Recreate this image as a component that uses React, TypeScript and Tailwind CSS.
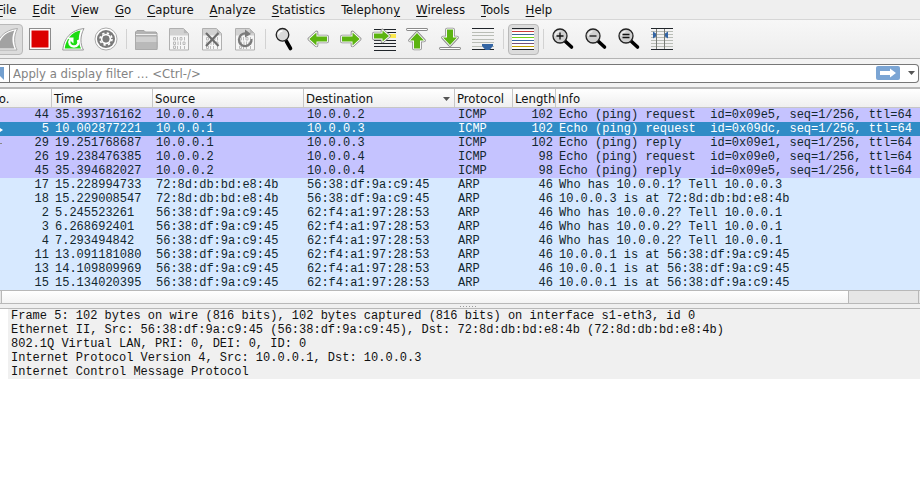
import React, { useState } from 'react';

const menus = [
  { name: 'File', key: 0 },
  { name: 'Edit', key: 0 },
  { name: 'View', key: 0 },
  { name: 'Go', key: 0 },
  { name: 'Capture', key: 0 },
  { name: 'Analyze', key: 0 },
  { name: 'Statistics', key: 0 },
  { name: 'Telephony', key: 8 },
  { name: 'Wireless', key: 0 },
  { name: 'Tools', key: 0 },
  { name: 'Help', key: 0 }
];

const packets = [
  { no: 44, time: '35.393716162', src: '10.0.0.4', dst: '10.0.0.2', proto: 'ICMP', len: 102, info: 'Echo (ping) request  id=0x09e5, seq=1/256, ttl=64' },
  { no: 5, time: '10.002877221', src: '10.0.0.1', dst: '10.0.0.3', proto: 'ICMP', len: 102, info: 'Echo (ping) request  id=0x09dc, seq=1/256, ttl=64' },
  { no: 29, time: '19.251768687', src: '10.0.0.1', dst: '10.0.0.3', proto: 'ICMP', len: 102, info: 'Echo (ping) reply    id=0x09e1, seq=1/256, ttl=64' },
  { no: 26, time: '19.238476385', src: '10.0.0.2', dst: '10.0.0.4', proto: 'ICMP', len: 98, info: 'Echo (ping) request  id=0x09e0, seq=1/256, ttl=64' },
  { no: 45, time: '35.394682027', src: '10.0.0.2', dst: '10.0.0.4', proto: 'ICMP', len: 98, info: 'Echo (ping) reply    id=0x09e5, seq=1/256, ttl=64' },
  { no: 17, time: '15.228994733', src: '72:8d:db:bd:e8:4b', dst: '56:38:df:9a:c9:45', proto: 'ARP', len: 46, info: 'Who has 10.0.0.1? Tell 10.0.0.3' },
  { no: 18, time: '15.229008547', src: '72:8d:db:bd:e8:4b', dst: '56:38:df:9a:c9:45', proto: 'ARP', len: 46, info: '10.0.0.3 is at 72:8d:db:bd:e8:4b' },
  { no: 2, time: '5.245523261', src: '56:38:df:9a:c9:45', dst: '62:f4:a1:97:28:53', proto: 'ARP', len: 46, info: 'Who has 10.0.0.2? Tell 10.0.0.1' },
  { no: 3, time: '6.268692401', src: '56:38:df:9a:c9:45', dst: '62:f4:a1:97:28:53', proto: 'ARP', len: 46, info: 'Who has 10.0.0.2? Tell 10.0.0.1' },
  { no: 4, time: '7.293494842', src: '56:38:df:9a:c9:45', dst: '62:f4:a1:97:28:53', proto: 'ARP', len: 46, info: 'Who has 10.0.0.2? Tell 10.0.0.1' },
  { no: 11, time: '13.091181080', src: '56:38:df:9a:c9:45', dst: '62:f4:a1:97:28:53', proto: 'ARP', len: 46, info: '10.0.0.1 is at 56:38:df:9a:c9:45' },
  { no: 13, time: '14.109809969', src: '56:38:df:9a:c9:45', dst: '62:f4:a1:97:28:53', proto: 'ARP', len: 46, info: '10.0.0.1 is at 56:38:df:9a:c9:45' },
  { no: 15, time: '15.134020395', src: '56:38:df:9a:c9:45', dst: '62:f4:a1:97:28:53', proto: 'ARP', len: 46, info: '10.0.0.1 is at 56:38:df:9a:c9:45' }
];

const details = [
  'Frame 5: 102 bytes on wire (816 bits), 102 bytes captured (816 bits) on interface s1-eth3, id 0',
  'Ethernet II, Src: 56:38:df:9a:c9:45 (56:38:df:9a:c9:45), Dst: 72:8d:db:bd:e8:4b (72:8d:db:bd:e8:4b)',
  '802.1Q Virtual LAN, PRI: 0, DEI: 0, ID: 0',
  'Internet Protocol Version 4, Src: 10.0.0.1, Dst: 10.0.0.3',
  'Internet Control Message Protocol'
];

// Sheet with a folded corner and binary digits, shared by the file icons
function Sheet() {
  return (
    <>
      <path d="M1.500 .5h14l5 5v16.500h-19z" fill="#f6f6f6" stroke="#b0b0b0" />
      <path d="M2 1h13.500v4.500h4.500v2H2z" fill="#d2d2d2" />
      <path d="M15.500 .5v5h5z" fill="#b8b8b8" />
      <g fill="none" stroke="#bababa">
        <path d="M5.500 9.500h2v2.500h-2zM9.500 9v3.500M12 9.500h2v2.500h-2zM16.500 9v3.500" />
        <path d="M5.500 14h2v2.500h-2zM10 13.500v3.500M12.500 13.500v3.500M15 14h2v2.500h-2z" />
        <path d="M5.500 18h2v2.500h-2zM9.500 18v3M12.500 18v3M16.500 18v3" />
      </g>
    </>
  );
}

function Lens({ children }: { children?: React.ReactNode }) {
  return (
    <>
      <path d="m13.500 13.500 6 5.500" stroke="#000" strokeWidth="3.600" strokeLinecap="round" />
      <circle cx="8" cy="8" r="7" fill="#cfcfcf" stroke="#222" strokeWidth="1.300" />
      <path d="M3.500 8a4.500 4.500 0 0 1 4-4.500" fill="none" stroke="#ededed" strokeWidth="1.500" />
      <g stroke="#111" strokeWidth="1.300">{children}</g>
    </>
  );
}

function Arrow({ d }: { d: string }) {
  return (
    <>
      <path d={d} fill="#fff" stroke="#8a8a8a" strokeWidth="3.600" strokeLinejoin="round" />
      <path d={d} fill="#5cb411" stroke="#fff" strokeWidth="1.800" strokeLinejoin="round" />
      <path d={d} fill="#5cb411" />
    </>
  );
}

const tools = [
  {
    label: 'Start capture',
    pressed: true,
    icon: (
      <>
        <path d="M0 22C1 10 8 2 21.500.5 17.500 8 18 16 21 22z" fill="#fff" stroke="#aaa" />
        <path d="M2 20.500C3 11 9 4.500 18.500 2.500 15.500 9 16 15 18.500 20.500z" fill="#a2a2a2" />
      </>
    )
  },
  {
    label: 'Stop capture',
    icon: (
      <>
        <rect x=".5" y=".5" width="21" height="21" fill="#f6f6f6" stroke="#8c8c8c" />
        <rect x="2" y="2" width="18" height="18" fill="#dc0000" stroke="#fff" />
      </>
    )
  },
  {
    label: 'Restart capture',
    icon: (
      <>
        <path d="M.7 22C2 10 9 2 22 .5 18 8 18 16 21.500 22z" fill="#fff" stroke="#999" />
        <path d="M2.700 20.500C4 11 10 4 18.500 2.500 16 9 16.500 15 19 20.500z" fill="#1ddb12" />
        <path d="M8 12c-2 3 .3 6.500 4 6.500s5.500-3.500 3.800-6.500" fill="none" stroke="#fff" strokeWidth="2.300" />
        <path d="M5 9.500h6.500v6z" fill="#fff" />
      </>
    )
  },
  {
    label: 'Capture options',
    icon: (
      <>
        <circle cx="11" cy="11" r="11" fill="#fff" stroke="#aaa" strokeWidth="1" />
        <circle cx="11" cy="11" r="9" fill="#7a7a7a" />
        <circle cx="11" cy="11" r="6" fill="none" stroke="#fff" strokeWidth="1.600" strokeDasharray="2.360 2.360" />
        <circle cx="11" cy="11" r="4.300" fill="none" stroke="#fff" strokeWidth="1.800" />
        <circle cx="11" cy="11" r="3.300" fill="#7a7a7a" />
      </>
    ),
    last: true
  },
  {
    label: 'Open file',
    icon: (
      <>
        <path d="M.5 19.500V4L2 2.500h7L10.500 4H21l1 1v14.500z" fill="#b4b4b4" stroke="#a4a4a4" />
        <path d="M1 6.500h20.500" stroke="#eee" />
        <path d="M0 8h22.500v6H0z" fill="#d0d0d0" />
        <path d="M0 14h22.500v7.500H0z" fill="#b9b9b9" />
        <path d="M.5 8h21.500v13.500H.5z" fill="none" stroke="#aaa" />
      </>
    )
  },
  { label: 'Save file', icon: <Sheet /> },
  {
    label: 'Close file',
    icon: (
      <>
        <Sheet />
        <path d="m5 5 12.500 13M17.500 5 5 18" stroke="#6c6c6c" strokeWidth="2.200" />
      </>
    )
  },
  {
    label: 'Reload file',
    icon: (
      <>
        <Sheet />
        <path d="M12 5.500a6.300 6.300 0 1 0 5.500 5.500" fill="none" stroke="#7a7a7a" strokeWidth="2.300" />
        <path d="M11 1.500 17 6l-6 3.500z" fill="#7a7a7a" />
      </>
    ),
    last: true
  },
  {
    label: 'Find packet',
    icon: (
      <>
        <path d="m12.500 13.500 4 7" stroke="#000" strokeWidth="3.600" strokeLinecap="round" />
        <circle cx="8.500" cy="6.800" r="6.300" fill="#d9d9d9" stroke="#222" strokeWidth="1.300" />
        <path d="M4.500 6.500A4 4 0 0 1 8.500 3" fill="none" stroke="#fff" strokeWidth="1.500" />
      </>
    )
  },
  { label: 'Previous packet', icon: <Arrow d="M2.300 11 9.500 4.500v4h10.500v5H9.500v4z" /> },
  { label: 'Next packet', icon: <Arrow d="M19.700 11 12.500 4.500v4H2v5h10.500v4z" /> },
  {
    label: 'Go to packet',
    icon: (
      <>
        <path d="M1 1.500h22M1 4.500h22M1 12.500h22M1 15.500h22M1 18.500h22M1 22.500h22" stroke="#20252a" />
        <path d="M16 6h7v4h-7z" fill="#fce94f" />
        <Arrow d="M16 8 9.500 2.500v3H1v5h8.500v3z" />
      </>
    )
  },
  {
    label: 'First packet',
    icon: (
      <>
        <path d="M1.500 1.500h19" stroke="#8a8a8a" strokeWidth="2.800" strokeLinecap="round" />
        <path d="M1.500 1.500h19" stroke="#fff" strokeLinecap="round" />
        <Arrow d="M11 5 4 12.500h4v8h6v-8h4z" />
      </>
    )
  },
  {
    label: 'Last packet',
    icon: (
      <>
        <path d="M1.500 20.500h19" stroke="#8a8a8a" strokeWidth="2.800" strokeLinecap="round" />
        <path d="M1.500 20.500h19" stroke="#fff" strokeLinecap="round" />
        <Arrow d="M11 17 4 9.500h4v-8h6v8h4z" />
      </>
    )
  },
  {
    label: 'Auto scroll',
    icon: (
      <>
        <path d="M0 .5h22M0 21.500h22" stroke="#20252a" />
        <path d="M0 4.500h22M0 7.500h22M0 11.500h22M0 14.500h22M0 18.500h22" stroke="#b9bdb6" />
        <path d="M10 16h11v2L17.500 22h-4L10 18z" fill="#3465a4" />
      </>
    ),
    last: true
  },
  {
    label: 'Colorize packets',
    pressed: true,
    icon: (
      <>
        <path d="M0 2h22v19H0z" fill="#fff" />
        <path d="M0 .5h22M0 21.500h22" stroke="#20252a" />
        <path d="M0 3.500h22" stroke="#cc3a3a" />
        <path d="M0 6.500h22" stroke="#3c6c94" />
        <path d="M0 9.500h22" stroke="#73d216" />
        <path d="M0 12.500h22" stroke="#3465a4" />
        <path d="M0 15.500h22" stroke="#75507b" />
        <path d="M0 18.500h22" stroke="#c4a000" />
      </>
    ),
    last: true
  },
  { label: 'Zoom in', icon: <Lens><path d="M4.500 8h7M8 4.500v7" /></Lens> },
  { label: 'Zoom out', icon: <Lens><path d="M4.500 8h7" /></Lens> },
  { label: 'Normal size', icon: <Lens><path d="M4.500 6.500h7M4.500 9.500h7" /></Lens> },
  {
    label: 'Resize columns',
    icon: (
      <>
        <path d="M0 3.500h22M0 6.500h22M0 9.500h22M0 12.500h22M0 15.500h22M0 18.500h22" stroke="#b9bdb6" />
        <path d="M0 .5h22M0 21.500h22" stroke="#20252a" />
        <path d="M5.500 1v20M13.500 1v20" stroke="#777b76" />
        <path d="M2 3.500l3 2v3l-3 2zM17 3.500l-3 2v3l3 2z" fill="#3465a4" />
      </>
    )
  }
];

function ToolBar() {
  return (
    <div className="flex h-10 items-center overflow-hidden border-y border-t-[#d6d6d6] border-b-[#b4b4b4] bg-linear-to-b from-[#f7f7f7] to-[#ededed]" role="toolbar">
      <div className="-ml-[9px] flex shrink-0 items-center">
        {tools.map((tool) => (
          <React.Fragment key={tool.label}>
            <button
              type="button"
              aria-label={tool.label}
              className={`mx-px flex size-[31px] items-center justify-center rounded-sm border ${
                tool.pressed ? 'border-[#b9b9b9] bg-[#dcdcdc]' : 'border-transparent'
              }`}
            >
              <svg className="size-[23px] overflow-visible" viewBox="0 0 23 23">{tool.icon}</svg>
            </button>
            {tool.last && <span className="mx-[3px] h-5 w-px bg-[#d2d2d2]" />}
          </React.Fragment>
        ))}
      </div>
    </div>
  );
}

function FilterBar() {
  const [filter, setFilter] = useState('');

  return (
    <div className="flex h-7 items-center bg-[#f3f3f3] pr-px">
      <div className="flex h-[19px] flex-1 items-center rounded-r-sm border-y border-r border-[#777] bg-white">
        <button type="button" aria-label="Bookmark filter" className="flex h-full w-[10px] items-center border-r border-[#777]">
          <svg className="h-[13px] w-1" viewBox="0 0 4 13">
            <path d="M0 0h4v13L0 9z" fill="#729fcf" />
          </svg>
        </button>
        <input
          aria-label="Display filter"
          className="h-full min-w-0 flex-1 bg-transparent pl-[3px] text-[13px] leading-4 outline-none placeholder:text-[#838383]"
          placeholder="Apply a display filter … <Ctrl-/>"
          value={filter}
          onChange={(e) => setFilter(e.target.value)}
        />
        <button type="button" aria-label="Apply filter" className="flex h-[14px] w-6 items-center justify-center rounded-xs bg-[#7ba5d4]">
          <svg className="h-[10px] w-4" viewBox="0 0 16 10">
            <path d="M0 3h10V.5L16 5l-6 4.500V7H0z" fill="#fff" />
          </svg>
        </button>
        <button type="button" aria-label="Recent filters" className="flex h-full w-[18px] items-center justify-center pl-1">
          <svg className="h-1 w-[7px]" viewBox="0 0 7 4">
            <path d="M0 0h7L3.500 4z" fill="#555" />
          </svg>
        </button>
      </div>
    </div>
  );
}

function PacketList() {
  const [selected, setSelected] = useState(5);
  const head = 'overflow-hidden border-r border-b border-[#c6c6c6] pt-[2px] pl-[2px] text-left font-normal';

  const rowColor = (no: number, proto: string) => {
    if (no === selected) return 'bg-[#308cc6] text-white';
    return proto === 'ICMP' ? 'bg-[#c5c3ff] text-[#12272e]' : 'bg-[#d7e9ff] text-[#12272e]';
  };

  return (
    <div className="overflow-hidden border-t-2 border-[#b8b8b8]">
      <table className="w-full table-fixed border-separate border-spacing-0 whitespace-pre">
        <colgroup>
          <col className="w-[52px]" />
          <col className="w-[101px]" />
          <col className="w-[151px]" />
          <col className="w-[151px]" />
          <col className="w-[58px]" />
          <col className="w-[43px]" />
          <col />
        </colgroup>
        <thead>
          <tr className="bg-linear-to-b from-white to-[#eeeeee] text-[13px] leading-4">
            <th className={head}><span className="-ml-3">No.</span></th>
            <th className={head}>Time</th>
            <th className={head}>Source</th>
            <th className={head}>
              <span className="flex items-center justify-between pr-1">
                Destination
                <svg className="h-1 w-[7px]" viewBox="0 0 7 4"><path d="M0 0h7L3.500 4z" fill="#555" /></svg>
              </span>
            </th>
            <th className={head}>Protocol</th>
            <th className={head}>Length</th>
            <th className="border-b border-[#c6c6c6] pt-[2px] pl-[2px] text-left font-normal">Info</th>
          </tr>
        </thead>
        <tbody className="font-['Liberation_Mono',monospace] text-[12px] leading-[14px]">
          {packets.map((p) => (
            <tr key={p.no} className={rowColor(p.no, p.proto)} onClick={() => setSelected(p.no)}>
              <td>
                <span className="flex h-[14px] items-center justify-between pr-[3px]">
                  <svg className="h-[7px] w-1" viewBox="0 0 4 7">
                    {p.no === 5 && <path d="M0 2l3 2-3 2z" fill="#fff" />}
                    {p.no === 29 && <path d="M0 3.500h2" stroke="#888" />}
                  </svg>
                  {p.no}
                </span>
              </td>
              <td className="pl-[3px]">{p.time}</td>
              <td className="pl-[3px]">{p.src}</td>
              <td className="pl-[3px]">{p.dst}</td>
              <td className="pl-[3px]">{p.proto}</td>
              <td className="pr-[3px] text-right">{p.len}</td>
              <td className="overflow-hidden pl-[3px]">{p.info}</td>
            </tr>
          ))}
        </tbody>
      </table>

      {/* Horizontal scroll track */}
      <div className="flex h-[14px] border-y border-[#b8b8b8] bg-[#e6e6e6] px-px">
        <div className="w-[848px] border-x border-[#b8b8b8] bg-linear-to-b from-white to-[#f3f3f3]" />
        <div className="flex-1 border-r border-[#b8b8b8]" />
      </div>
    </div>
  );
}

export default function App() {
  return (
    <div className="flex min-h-screen flex-col bg-white font-['DejaVu_Sans_Condensed','DejaVu_Sans',sans-serif] text-[13px] text-[#111]">
      <nav className="flex h-[19px] items-start gap-4 overflow-hidden bg-[#efefef]">
        {menus.map((m, i) => (
          <button key={m.name} type="button" className={`shrink-0 leading-5 ${i === 0 ? '-ml-[3px]' : ''}`}>
            {m.name.slice(0, m.key)}
            <span className="underline underline-offset-2">{m.name[m.key]}</span>
            {m.name.slice(m.key + 1)}
          </button>
        ))}
      </nav>
      <ToolBar />
      <FilterBar />
      <PacketList />

      {/* Splitter grip */}
      <div className="flex h-[5px] items-center justify-center gap-[2px] border-b border-[#b8b8b8] bg-[#efefef] pl-4">
        {[0, 1, 2, 3, 4, 5].map((n) => (
          <span key={n} className="size-px bg-[#999]" />
        ))}
      </div>

      <ul className="ml-2 overflow-hidden bg-[#f0f0f0] pl-[3px] font-['Liberation_Mono',monospace] text-[12px] leading-[14px] whitespace-pre">
        {details.map((line) => (
          <li key={line}>{line}</li>
        ))}
      </ul>
    </div>
  );
}
